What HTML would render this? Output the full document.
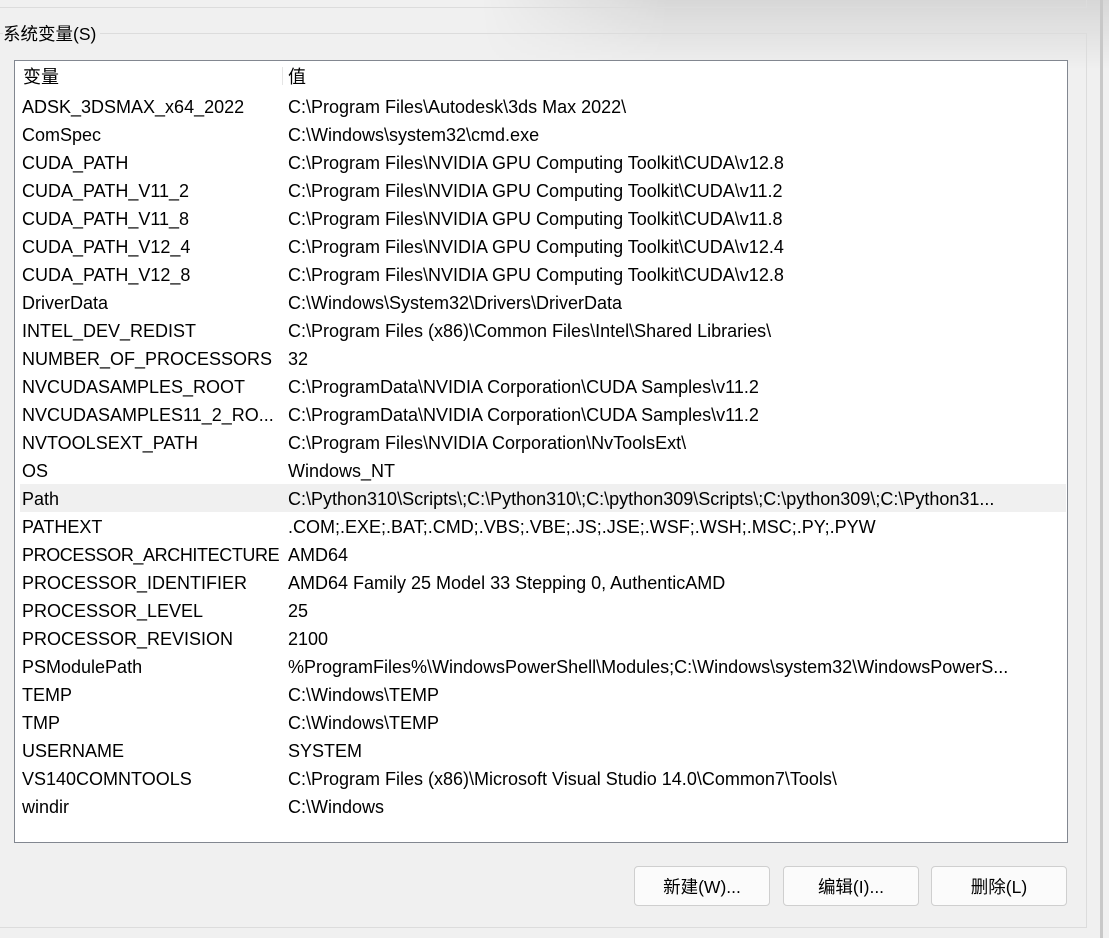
<!DOCTYPE html>
<html><head><meta charset="utf-8"><style>
*{margin:0;padding:0;box-sizing:border-box}
body{width:1109px;height:938px;background:#f0f0f0;position:relative;overflow:hidden;font-family:"Liberation Sans","Noto Sans CJK SC",sans-serif;color:#000}
.shade{position:absolute;left:480px;top:0;width:629px;height:70px;background:linear-gradient(to bottom,rgba(0,0,0,0.10),rgba(0,0,0,0));-webkit-mask:linear-gradient(to right,transparent,#000 30%);mask:linear-gradient(to right,transparent,#000 30%)}
.l{position:absolute;background:#dcdcdc}
.edge{position:absolute;left:1100px;top:0;width:3px;height:938px;background:#c8c8c8}
.gt{position:absolute;left:3px;top:23px;font-size:17.5px;background:#f0f0f0;padding-right:4px;line-height:22px}
.list{position:absolute;left:14px;top:60px;width:1054px;height:783px;background:#fff;border:1px solid #828790}
.hdr{position:absolute;left:0;top:0;width:100%;height:31px;font-size:18px;line-height:33px}
.hdr span{position:absolute;top:0}
.div{position:absolute;left:267px;top:2px;width:1px;height:18px;background:#e5e5e5}
.row{position:absolute;left:5px;width:1046px;height:28px;font-size:18px;line-height:30px;white-space:nowrap}
.row.sel{background:#f0f0f0}
.row span{position:absolute;top:0}
.a{left:2px}.b{left:268px}
.btn{position:absolute;top:866px;width:136px;height:40px;border:1px solid #cfcfcf;border-radius:4px;background:#fbfbfb;font-size:17.5px;text-align:center;line-height:40px}
</style></head><body>
<div class="shade"></div>
<div class="l" style="left:0;top:7px;width:1087px;height:1px"></div>
<div class="l" style="left:1086px;top:0;width:1px;height:8px"></div>
<div class="l" style="left:0;top:33px;width:1087px;height:1px"></div>
<div class="l" style="left:1086px;top:33px;width:1px;height:895px"></div>
<div class="l" style="left:0;top:927px;width:1087px;height:1px"></div>
<div class="edge"></div>
<div class="gt">系统变量(S)</div>
<div class="list">
<div class="hdr"><span style="left:8px">变量</span><div class="div" style="top:6px"></div><span style="left:273px">值</span></div>
<div class="row" style="top:31px"><span class="a">ADSK_3DSMAX_x64_2022</span><span class="b">C:\Program Files\Autodesk\3ds Max 2022\</span></div>
<div class="row" style="top:59px"><span class="a">ComSpec</span><span class="b">C:\Windows\system32\cmd.exe</span></div>
<div class="row" style="top:87px"><span class="a">CUDA_PATH</span><span class="b">C:\Program Files\NVIDIA GPU Computing Toolkit\CUDA\v12.8</span></div>
<div class="row" style="top:115px"><span class="a">CUDA_PATH_V11_2</span><span class="b">C:\Program Files\NVIDIA GPU Computing Toolkit\CUDA\v11.2</span></div>
<div class="row" style="top:143px"><span class="a">CUDA_PATH_V11_8</span><span class="b">C:\Program Files\NVIDIA GPU Computing Toolkit\CUDA\v11.8</span></div>
<div class="row" style="top:171px"><span class="a">CUDA_PATH_V12_4</span><span class="b">C:\Program Files\NVIDIA GPU Computing Toolkit\CUDA\v12.4</span></div>
<div class="row" style="top:199px"><span class="a">CUDA_PATH_V12_8</span><span class="b">C:\Program Files\NVIDIA GPU Computing Toolkit\CUDA\v12.8</span></div>
<div class="row" style="top:227px"><span class="a">DriverData</span><span class="b">C:\Windows\System32\Drivers\DriverData</span></div>
<div class="row" style="top:255px"><span class="a">INTEL_DEV_REDIST</span><span class="b">C:\Program Files (x86)\Common Files\Intel\Shared Libraries\</span></div>
<div class="row" style="top:283px"><span class="a">NUMBER_OF_PROCESSORS</span><span class="b">32</span></div>
<div class="row" style="top:311px"><span class="a">NVCUDASAMPLES_ROOT</span><span class="b">C:\ProgramData\NVIDIA Corporation\CUDA Samples\v11.2</span></div>
<div class="row" style="top:339px"><span class="a">NVCUDASAMPLES11_2_RO...</span><span class="b">C:\ProgramData\NVIDIA Corporation\CUDA Samples\v11.2</span></div>
<div class="row" style="top:367px"><span class="a">NVTOOLSEXT_PATH</span><span class="b">C:\Program Files\NVIDIA Corporation\NvToolsExt\</span></div>
<div class="row" style="top:395px"><span class="a">OS</span><span class="b">Windows_NT</span></div>
<div class="row sel" style="top:423px"><span class="a">Path</span><span class="b">C:\Python310\Scripts\;C:\Python310\;C:\python309\Scripts\;C:\python309\;C:\Python31...</span></div>
<div class="row" style="top:451px"><span class="a">PATHEXT</span><span class="b">.COM;.EXE;.BAT;.CMD;.VBS;.VBE;.JS;.JSE;.WSF;.WSH;.MSC;.PY;.PYW</span></div>
<div class="row" style="top:479px"><span class="a" style="letter-spacing:-0.4px">PROCESSOR_ARCHITECTURE</span><span class="b">AMD64</span></div>
<div class="row" style="top:507px"><span class="a">PROCESSOR_IDENTIFIER</span><span class="b">AMD64 Family 25 Model 33 Stepping 0, AuthenticAMD</span></div>
<div class="row" style="top:535px"><span class="a">PROCESSOR_LEVEL</span><span class="b">25</span></div>
<div class="row" style="top:563px"><span class="a">PROCESSOR_REVISION</span><span class="b">2100</span></div>
<div class="row" style="top:591px"><span class="a">PSModulePath</span><span class="b">%ProgramFiles%\WindowsPowerShell\Modules;C:\Windows\system32\WindowsPowerS...</span></div>
<div class="row" style="top:619px"><span class="a">TEMP</span><span class="b">C:\Windows\TEMP</span></div>
<div class="row" style="top:647px"><span class="a">TMP</span><span class="b">C:\Windows\TEMP</span></div>
<div class="row" style="top:675px"><span class="a">USERNAME</span><span class="b">SYSTEM</span></div>
<div class="row" style="top:703px"><span class="a">VS140COMNTOOLS</span><span class="b">C:\Program Files (x86)\Microsoft Visual Studio 14.0\Common7\Tools\</span></div>
<div class="row" style="top:731px"><span class="a">windir</span><span class="b">C:\Windows</span></div>
</div>
<div class="btn" style="left:634px">新建(W)...</div>
<div class="btn" style="left:783px">编辑(I)...</div>
<div class="btn" style="left:931px">删除(L)</div>
</body></html>
